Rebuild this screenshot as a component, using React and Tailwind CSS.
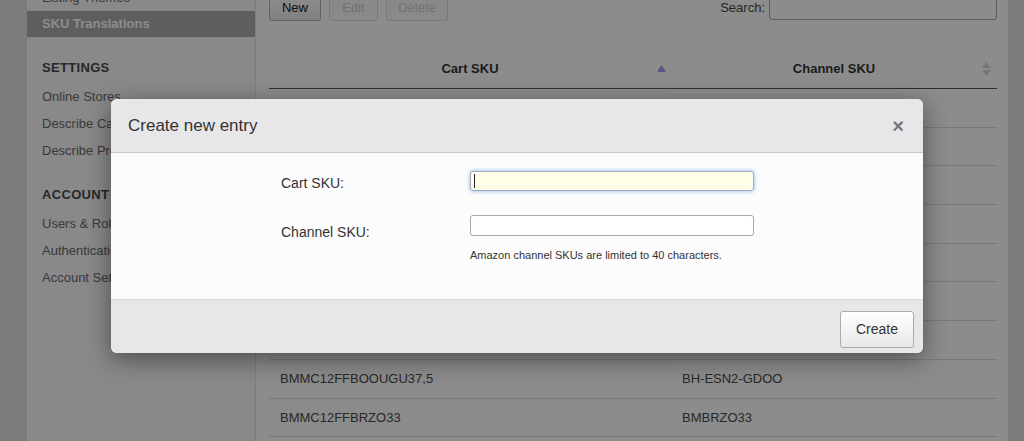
import React from "react";

const rows = [
  ["BMMC12FFAZUL35", "BH-ESN2-AZ35"],
  ["BMMC12FFAZUL36", "BH-ESN2-AZ36"],
  ["BMMC12FFAZUL37", "BH-ESN2-AZ37"],
  ["BMMC12FFBOOUGU35", "BH-ESN2-GD35"],
  ["BMMC12FFBOOUGU36", "BH-ESN2-GD36"],
  ["BMMC12FFBOOUGU37", "BH-ESN2-GD37"],
  ["BMMC12FFBOOUGU38", "BH-ESN2-GD38"],
  ["BMMC12FFBOOUGU37,5", "BH-ESN2-GDOO"],
  ["BMMC12FFBRZO33", "BMBRZO33"],
];

const SideItem = ({ children, active }) => (
  <div
    className={`h-[26px] flex items-center pl-[15px] text-[13px] whitespace-nowrap ${
      active ? "bg-[#ababab] text-white font-bold" : "text-[#6a6a6a]"
    }`}
  >
    {children}
  </div>
);

const SideHeading = ({ children }) => (
  <div className="mt-[21px] mb-[6px] h-[20px] flex items-center pl-[15px] text-[13px] font-bold text-[#4a4a4a] tracking-wide">
    {children}
  </div>
);

const App = () => {
  return (
    <div
      className="relative w-full h-[441px] overflow-hidden bg-[#e0e0e0]"
      style={{ fontFamily: '"Liberation Sans", Arial, sans-serif' }}
    >
      {/* page under the dialog */}
      <div className="flex h-[460px] -mt-[15px] pl-[27px] pr-[16px]">
        <div className="w-[229px] shrink-0 bg-[#f9f9f9] border-r border-[#e2e2e2]">
          <SideItem>Listing Themes</SideItem>
          <SideItem active>SKU Translations</SideItem>
          <SideHeading>SETTINGS</SideHeading>
          <div className="flex flex-col gap-[1px]">
            <SideItem>Online Stores</SideItem>
            <SideItem>Describe Categories</SideItem>
            <SideItem>Describe Products</SideItem>
          </div>
          <SideHeading>ACCOUNT</SideHeading>
          <div className="flex flex-col gap-[1px]">
            <SideItem>Users &amp; Roles</SideItem>
            <SideItem>Authentication</SideItem>
            <SideItem>Account Settings</SideItem>
          </div>
        </div>

        <div className="flex-1 bg-white pt-[10px] pl-[13px] pr-[11px]">
          <div className="flex items-center justify-between h-[26px]">
            <div className="flex gap-[8px]">
              <button className="h-[26px] w-[52px] rounded-[3px] border border-[#b5b5b5] bg-gradient-to-b from-white to-[#ececec] text-[13px] text-[#222]">
                New
              </button>
              <button className="h-[26px] w-[49px] rounded-[3px] border border-[#dcdcdc] bg-[#fafafa] text-[13px] text-[#cfcfcf]">
                Edit
              </button>
              <button className="h-[26px] w-[62px] rounded-[3px] border border-[#dcdcdc] bg-[#fafafa] text-[13px] text-[#cfcfcf]">
                Delete
              </button>
            </div>
            <label className="flex items-center gap-[4px] text-[13px] text-[#444]">
              Search:
              <input className="h-[24px] w-[228px] rounded-[3px] border border-[#a8a8a8] bg-white" />
            </label>
          </div>

          <div className="mt-[28px]">
            <div className="flex h-[40px] border-b border-[#555] text-[13px] font-bold text-[#333]">
              <div className="relative w-[402px] flex items-center justify-center">
                Cart SKU
                <span className="absolute right-[5px] top-[16px]">
                  <svg width="9" height="7" viewBox="0 0 9 7">
                    <path d="M4.5 0 L9 7 L0 7 Z" fill="#9d9df2" />
                  </svg>
                </span>
              </div>
              <div className="relative flex-1 flex items-center justify-center">
                Channel SKU
                <span className="absolute right-[6px] top-[13px]">
                  <svg width="9" height="14" viewBox="0 0 9 14">
                    <path d="M4.5 0 L9 6 L0 6 Z" fill="#d8d8d8" />
                    <path d="M4.5 14 L9 8 L0 8 Z" fill="#d8d8d8" />
                  </svg>
                </span>
              </div>
            </div>
            {rows.map(([cart, channel], i) => (
              <div
                key={i}
                className="flex h-[38.7px] border-b border-[#dddddd] text-[13px] text-[#4a4a4a]"
              >
                <div className="w-[402px] flex items-center px-[11px] bg-[#fdfdfd]">{cart}</div>
                <div className="flex-1 flex items-center px-[11px]">{channel}</div>
              </div>
            ))}
          </div>
        </div>
      </div>

      {/* dimming overlay */}
      <div className="absolute inset-0 bg-black/45" />

      {/* dialog */}
      <div className="absolute left-[111px] top-[99px] w-[812px] rounded-[6px] bg-[#fcfcfc] shadow-[0_6px_24px_rgba(0,0,0,0.45)] overflow-hidden">
        <div className="flex items-center justify-between h-[54px] px-[17px] bg-[#e7e7e9] border-b border-[#c9c9cd]">
          <span className="text-[17px] text-[#333]">Create new entry</span>
          <span className="text-[20px] font-bold text-[#777] leading-none mr-[2px]">×</span>
        </div>

        <div className="h-[146px] pt-[18px] pl-[170px]">
          <div className="flex items-start">
            <div className="w-[189px] pt-[2px] text-[14px] text-[#333]">Cart SKU:</div>
            <div className="relative">
              <input className="block h-[20px] w-[284px] rounded-[3px] border border-[#a0aab8] bg-[#fefde7] shadow-[0_0_4px_rgba(90,150,235,0.7)]" />
              <span className="absolute left-[4px] top-[3px] h-[14px] w-[1px] bg-[#222]" />
            </div>
          </div>
          <div className="flex items-start mt-[21px]">
            <div className="w-[189px] pt-[7px] text-[14px] text-[#333]">Channel SKU:</div>
            <div>
              <input className="block h-[21px] w-[284px] rounded-[3px] border border-[#a9a9a9] bg-white" />
              <div className="mt-[11px] text-[11px] text-[#333]">
                Amazon channel SKUs are limited to 40 characters.
              </div>
            </div>
          </div>
        </div>

        <div className="flex items-start justify-end h-[54px] pt-[11px] pr-[9px] bg-[#e7e7e9] border-t border-[#d6d6d9]">
          <button className="h-[37px] w-[74px] rounded-[3px] border border-[#ababab] bg-gradient-to-b from-white to-[#e8e8e8] text-[14px] text-[#333]">
            Create
          </button>
        </div>
      </div>
    </div>
  );
};

export default App;
